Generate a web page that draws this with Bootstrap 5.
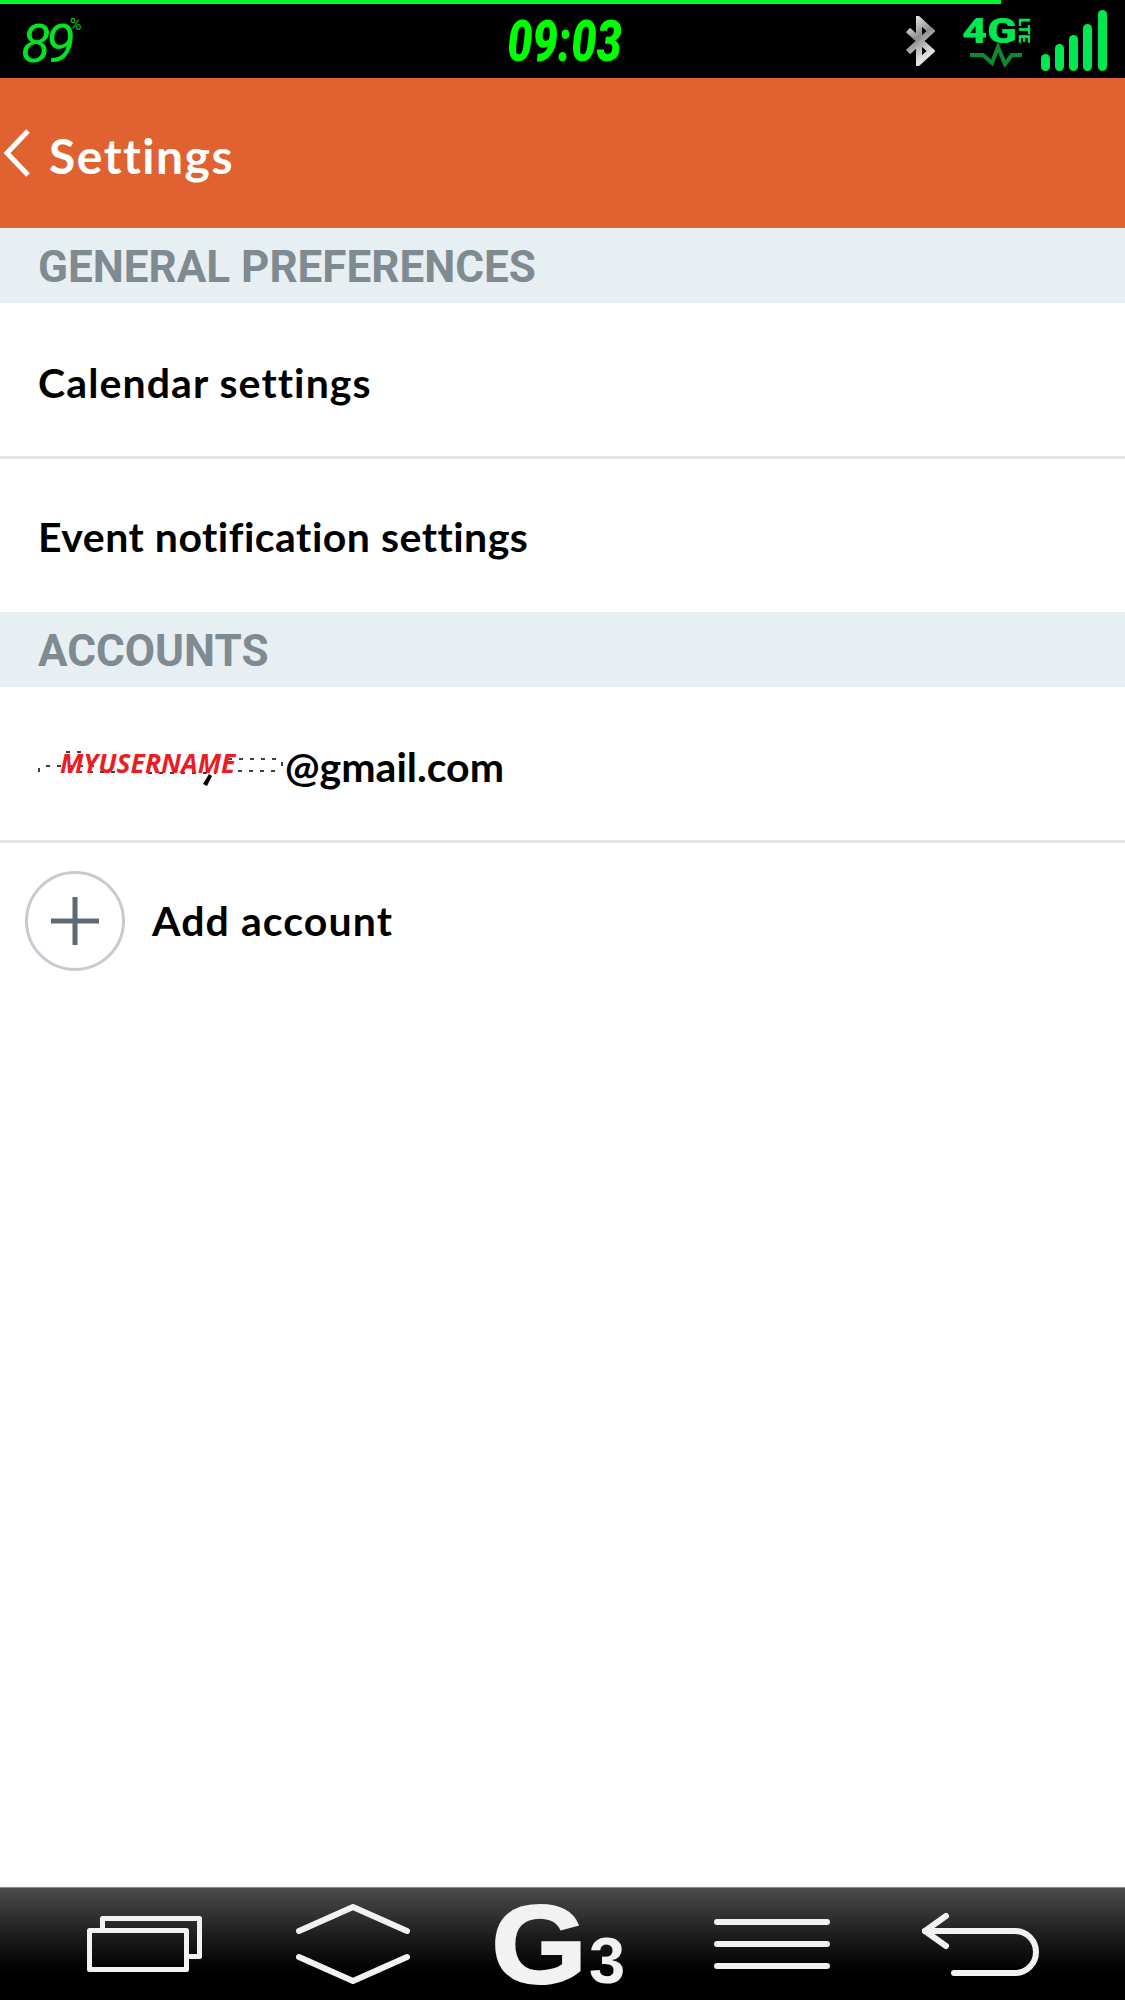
<!DOCTYPE html>
<html lang="en">
<head>
  <meta charset="UTF-8">
  <meta name="viewport" content="width=device-width, initial-scale=1.0">
  <title>Settings</title>
  <link href="https://cdn.jsdelivr.net/npm/bootstrap@5.3.2/dist/css/bootstrap.min.css" rel="stylesheet">
  <style>
    body { background: #fff; color: #000; font-family: "Lato", "Liberation Sans", sans-serif; }
    .batt-line { height: 4px; background: #00f82a; }
    .status-bar { height: 74px; background: #000; padding: 0 17px 0 21px; }
    .status-side { flex: 1 1 0; }
    .batt-num { font: italic 400 54px/1 "Roboto", sans-serif; color: #00e61e; letter-spacing: -5px; margin-top: 6px; }
    .batt-pct { font: 400 16px/1 "Roboto", sans-serif; color: #00c81e; margin: 6px 0 0 0; }
    .clock { font: italic 900 57px/1 "Roboto", sans-serif; color: #00ff00; transform: scaleX(.79); }
    .app-bar { height: 150px; background: #e06230; color: #fff; padding: 5px 0 0 2px; }
    .app-bar svg { margin-top: -5px; }
    .app-title { font-size: 48px; font-weight: 700; letter-spacing: 1.5px; margin-left: 17px; line-height: 1; }
    .group-head { height: 75px; background: #e7eff3; color: #7f8a91; padding: 4px 0 0 38px; font: 700 44px/71px "Roboto", sans-serif; }
    .set-item.list-group-item { height: 156px; padding: 6px 38px 0; border: 0; border-bottom: 3px solid #e6e6e6; font-size: 41px; font-weight: 700; letter-spacing: .5px; color: #000; }
    .set-item.list-group-item.roomy { letter-spacing: 1.1px; }
    .set-item.list-group-item.tight { letter-spacing: 0; }
    .set-item.no-line { height: 153px; border-bottom: 0; padding-top: 3px; }
    .set-item.list-group-item.add-item { height: 154px; padding: 2px 0 0 25px; gap: 27px; }
    .redact { width: 247px; height: 50px; }
    .redact svg { display: block; margin-top: -2px; }
    .redact-name { position: absolute; left: 22px; top: 8px; font: italic 700 26.5px/1 "Open Sans", sans-serif; letter-spacing: 0; color: #ed1c24; }
    .plus-ring { width: 100px; height: 100px; border: 3px solid #c5cbd0; border-radius: 50%; }
    .soft-bar { height: 113px; background: linear-gradient(#4c4c4c 0, #1a1a1a 45%, #000 75%); border-top: 1px solid #8a8a8a; padding: 0 40px; }
    .soft-slot { width: 209px; }
    .g3-mark { color: #f2f2f2; font-family: "Liberation Sans", sans-serif; font-weight: 700; line-height: 90px; margin-top: 8px; transform: translateY(5px); }
    .g3-g { font-size: 112px; -webkit-text-stroke: 2px #f2f2f2; transform: scaleX(1.1); transform-origin: right center; }
    .g3-three { font-size: 65px; margin-left: 2px; }
  </style>
</head>
<body>
  <div class="d-flex flex-column vh-100">
    <!-- battery line + status bar -->
    <div class="bg-black"><div class="batt-line" style="width: 89%"></div></div>
    <div class="status-bar d-flex align-items-center">
      <div class="status-side d-flex align-items-start">
        <span class="batt-num">89</span><span class="batt-pct">%</span>
      </div>
      <div class="clock">09:03</div>
      <div class="status-side d-flex justify-content-end align-items-center gap-2">
        <svg width="30" height="50" viewBox="0 0 30 50">
          <defs>
            <linearGradient id="btGrad" x1="0" y1="0" x2="0.4" y2="1">
              <stop offset="0" stop-color="#f0f0f0"/><stop offset=".5" stop-color="#8e8e8e"/><stop offset="1" stop-color="#e2e2e2"/>
            </linearGradient>
          </defs>
          <path d="M3 14 L26 35 L14 46 V4 L26 15 L3 36" fill="none" stroke="url(#btGrad)" stroke-width="6"/>
        </svg>
        <svg width="73" height="62" viewBox="0 0 73 62" class="ms-3">
          <text x="3" y="33" font-family="Roboto, sans-serif" font-weight="900" font-size="35" fill="#00e850" textLength="55" lengthAdjust="spacingAndGlyphs">4G</text>
          <text transform="translate(60 8) rotate(90)" font-family="Roboto, sans-serif" font-weight="900" font-size="14" fill="#00e850" textLength="25" lengthAdjust="spacingAndGlyphs">LTE</text>
          <path d="M11 45 H24 L33 53 L39 37 L46 54 L53 45 H63" fill="none" stroke="#0b8a2f" stroke-width="4"/>
        </svg>
        <svg width="68" height="62" viewBox="0 0 68 62" class="ms-n1">
          <g fill="#00e850">
            <rect x="1" y="44" width="9" height="17" rx="4.5"/>
            <rect x="15" y="34" width="9" height="27" rx="4.5"/>
            <rect x="29" y="25" width="9" height="36" rx="4.5"/>
            <rect x="43" y="14" width="9" height="47" rx="4.5"/>
            <rect x="58" y="0" width="9" height="61" rx="4.5"/>
          </g>
        </svg>
      </div>
    </div>

    <!-- app bar -->
    <div class="app-bar d-flex align-items-center">
      <svg width="30" height="50" viewBox="0 0 30 50">
        <path d="M26 3 L5 25 L26 47" fill="none" stroke="#fff" stroke-width="5"/>
      </svg>
      <span class="app-title">Settings</span>
    </div>

    <div class="flex-grow-1">
      <div class="group-head">GENERAL PREFERENCES</div>
      <div class="list-group list-group-flush">
        <div class="list-group-item set-item roomy d-flex align-items-center">Calendar settings</div>
        <div class="list-group-item set-item no-line d-flex align-items-center">Event notification settings</div>
      </div>
      <div class="group-head">ACCOUNTS</div>
      <div class="list-group list-group-flush">
        <div class="list-group-item set-item tight d-flex align-items-center">
          <span class="redact position-relative d-inline-block">
            <svg width="247" height="50" viewBox="0 0 247 50">
              <g fill="none" stroke="#000" stroke-width="1.5" stroke-dasharray="4 7">
                <path d="M1 28 V36"/>
                <path d="M8 26 H60"/>
                <path d="M28 12 H45"/>
                <path d="M40 32 H78"/>
                <path d="M110 33 H178"/>
                <path d="M190 19 H244"/>
                <path d="M200 31 H240"/>
                <path d="M244 22 V28"/>
              </g>
              <path d="M165 44 L171 34 L174 36 L169 46 Z" fill="#000"/>
            </svg>
            <span class="redact-name">MYUSERNAME</span>
          </span>@gmail.com
        </div>
        <div class="list-group-item set-item roomy add-item d-flex align-items-center">
          <span class="plus-ring d-flex align-items-center justify-content-center flex-shrink-0">
            <svg width="48" height="48" viewBox="0 0 48 48">
              <path d="M24 0 V48 M0 24 H48" stroke="#5c6a75" stroke-width="5"/>
            </svg>
          </span>
          <span>Add account</span>
        </div>
      </div>
    </div>

    <!-- soft keys -->
    <div class="soft-bar d-flex align-items-center">
      <div class="soft-slot d-flex justify-content-center">
        <svg width="115" height="56" viewBox="0 0 115 56" fill="none" stroke="#f2f2f2" stroke-width="5" stroke-linejoin="round">
          <rect x="2.5" y="14.5" width="97" height="39"/>
          <path d="M15.5 12 V2.5 H112.5 V40.5 H102"/>
        </svg>
      </div>
      <div class="soft-slot d-flex justify-content-center">
        <svg width="115" height="80" viewBox="0 0 115 80" fill="none" stroke="#f2f2f2" stroke-width="6" stroke-linecap="round" stroke-linejoin="round">
          <path d="M3 27 L57 3 L111 27"/>
          <path d="M3 53 L57 77 L111 53"/>
        </svg>
      </div>
      <div class="soft-slot d-flex justify-content-center">
        <span class="g3-mark d-flex align-items-baseline"><span class="g3-g">G</span><span class="g3-three">3</span></span>
      </div>
      <div class="soft-slot d-flex justify-content-center">
        <svg width="116" height="50" viewBox="0 0 116 50" fill="none" stroke="#f2f2f2" stroke-width="6" stroke-linecap="round">
          <path d="M3 3 H113 M3 25 H113 M3 47 H113"/>
        </svg>
      </div>
      <div class="soft-slot d-flex justify-content-center">
        <svg width="120" height="63" viewBox="0 0 120 63" fill="none" stroke="#f2f2f2" stroke-width="6" stroke-linecap="round" stroke-linejoin="round">
          <path d="M25 3 L4 18 L25 33"/>
          <path d="M4 18 H94 A21 21 0 0 1 94 60 H33"/>
        </svg>
      </div>
    </div>
  </div>
  <script src="https://cdn.jsdelivr.net/npm/bootstrap@5.3.2/dist/js/bootstrap.bundle.min.js"></script>
</body>
</html>
